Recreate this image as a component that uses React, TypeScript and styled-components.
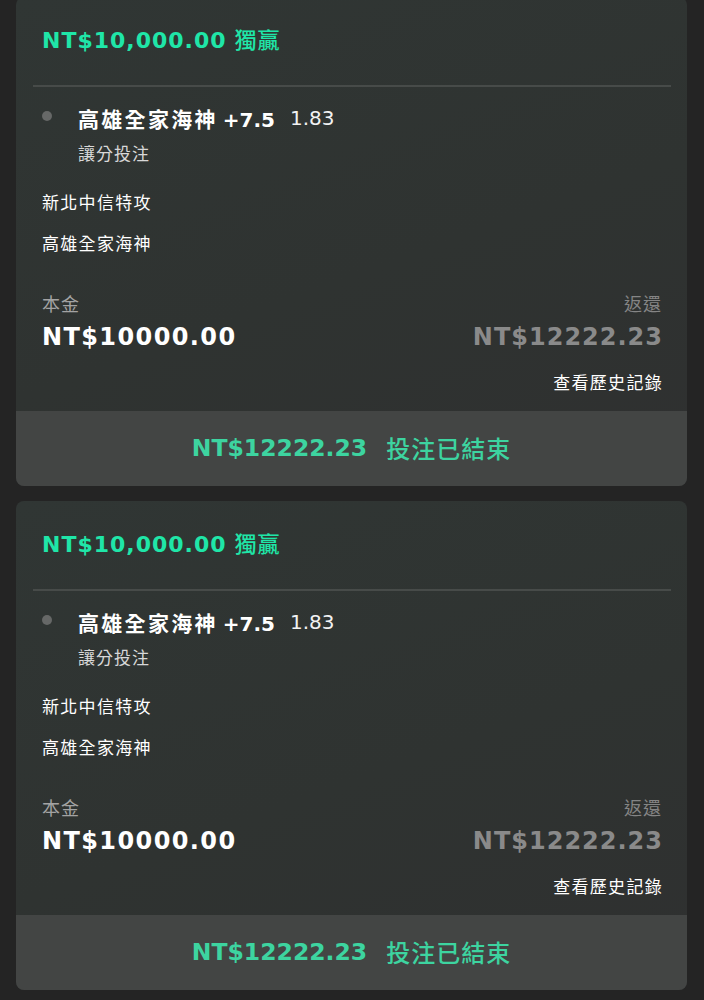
import styled, { createGlobalStyle } from 'styled-components'

const GlobalStyle = createGlobalStyle`
  body {
    margin: 0;
    background: #242424;
    font-family: "DejaVu Sans", "Noto Sans CJK TC", sans-serif;
  }
`

const List = styled.div`
  display: flex;
  flex-direction: column;
  gap: 15px;
  padding: 0 17px 0 16px;
  margin-top: -3px;
`

const Card = styled.div`
  border-radius: 8px;
  overflow: hidden;
  background: linear-gradient(160deg, #303634 0%, #2f3331 55%, #2f3030 100%);
`

const Header = styled.div`
  height: 82px;
  padding: 0 26px 6px;
  display: flex;
  align-items: center;
`

const Title = styled.div`
  color: #1fe6a8;
  font-size: 22px;
  font-weight: 700;
  letter-spacing: 1px;
  span {
    font-weight: 500;
    margin-left: 8px;
  }
`

const Divider = styled.div`
  height: 2px;
  margin: 0 16px 0 17px;
  background: #474b49;
`

const Body = styled.div`
  padding: 16px 25px 0 26px;
  display: flex;
  flex-direction: column;
`

const BetRow = styled.div`
  display: flex;
  align-items: center;
  height: 30px;
`

const Dot = styled.div`
  width: 10px;
  height: 10px;
  border-radius: 50%;
  background: #666867;
  margin: -4px 26px 0 0;
`

const Pick = styled.div`
  color: #ffffff;
  font-size: 21px;
  font-weight: 700;
  letter-spacing: 2.3px;
  b {
    font-size: 20px;
    font-weight: 700;
    letter-spacing: 0;
    margin-left: 5px;
  }
`

const Odds = styled.span`
  color: #f2f2f2;
  font-size: 20px;
  font-weight: 400;
  margin-left: 15px;
`

const Sub = styled.div`
  color: #d8d8d8;
  font-size: 17px;
  line-height: 26px;
  letter-spacing: 1px;
  margin-top: 8px;
  padding-left: 36px;
`

const Team = styled.div<{ $gap: number }>`
  color: #ffffff;
  font-size: 17px;
  line-height: 26px;
  letter-spacing: 1.3px;
  margin-top: ${p => p.$gap}px;
`

const Money = styled.div`
  display: flex;
  justify-content: space-between;
  margin-top: 35px;
`

const MoneyCol = styled.div<{ $right?: boolean }>`
  display: flex;
  flex-direction: column;
  align-items: ${p => (p.$right ? 'flex-end' : 'flex-start')};
`

const MoneyLabel = styled.div<{ $right?: boolean }>`
  color: ${p => (p.$right ? '#858585' : '#a3a3a3')};
  font-size: 18px;
  line-height: 26px;
  letter-spacing: 1px;
`

const Amount = styled.div<{ $right?: boolean }>`
  color: ${p => (p.$right ? '#8a8a8a' : '#ffffff')};
  font-size: 24px;
  font-weight: 700;
  line-height: 34px;
  margin-top: 2px;
  letter-spacing: ${p => (p.$right ? 1 : 1.4)}px;
  margin-right: ${p => (p.$right ? -1 : 0)}px;
`

const History = styled.div`
  align-self: flex-end;
  color: #ffffff;
  font-size: 17px;
  line-height: 26px;
  margin-top: 16px;
  letter-spacing: 1.3px;
  margin-right: -1px;
`

const Footer = styled.div`
  margin-top: 15px;
  height: 75px;
  padding-bottom: 2px;
  box-sizing: border-box;
  display: flex;
  align-items: center;
  justify-content: center;
  gap: 19px;
  background: #434544;
  color: #3dd4a0;
`

const FooterAmount = styled.span`
  font-size: 23.5px;
  font-weight: 700;
`

const FooterStatus = styled.span`
  font-size: 24px;
  font-weight: 500;
  letter-spacing: 1px;
`

const BetCard = () => (
  <Card>
    <Header>
      <Title>
        NT$10,000.00<span>獨贏</span>
      </Title>
    </Header>
    <Divider />
    <Body>
      <BetRow>
        <Dot />
        <Pick>
          高雄全家海神<b>+7.5</b>
        </Pick>
        <Odds>1.83</Odds>
      </BetRow>
      <Sub>讓分投注</Sub>
      <Team $gap={23}>新北中信特攻</Team>
      <Team $gap={15}>高雄全家海神</Team>
      <Money>
        <MoneyCol>
          <MoneyLabel>本金</MoneyLabel>
          <Amount>NT$10000.00</Amount>
        </MoneyCol>
        <MoneyCol $right>
          <MoneyLabel $right>返還</MoneyLabel>
          <Amount $right>NT$12222.23</Amount>
        </MoneyCol>
      </Money>
      <History>查看歷史記錄</History>
    </Body>
    <Footer>
      <FooterAmount>NT$12222.23</FooterAmount>
      <FooterStatus>投注已結束</FooterStatus>
    </Footer>
  </Card>
)

export default function App() {
  return (
    <>
      <GlobalStyle />
      <List>
        <BetCard />
        <BetCard />
      </List>
    </>
  )
}
